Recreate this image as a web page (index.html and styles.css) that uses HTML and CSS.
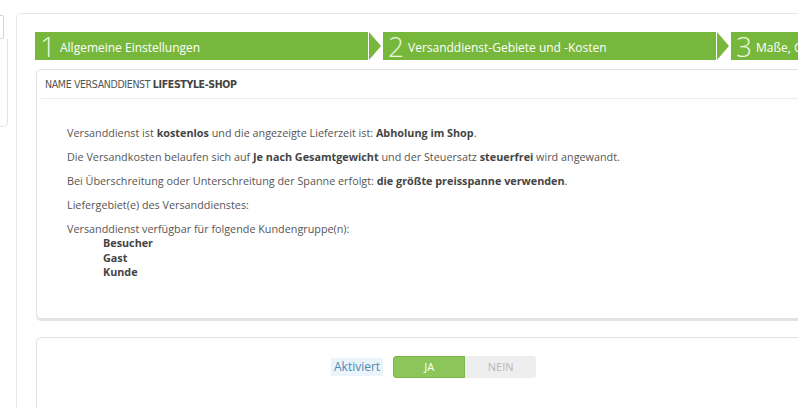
FILE: index.html
```html
<!DOCTYPE html>
<html lang="de">
<head>
<meta charset="utf-8">
<title>Versanddienst</title>
<link rel="stylesheet" href="styles.css">
</head>
<body>
<div class="page">
  <aside class="side">
    <div class="side-input"></div>
    <div class="side-box"></div>
  </aside>
  <main class="panel">
    <nav class="steps">
      <div class="step">
        <div class="step-body"><span class="step-num">1</span><span class="step-label">Allgemeine Einstellungen</span></div>
        <svg class="step-arrow" width="14" height="28" viewBox="0 0 14 28"><polygon points="1,0 13,14 1,28" fill="#77b83c"/></svg>
      </div>
      <div class="step">
        <div class="step-body"><span class="step-num">2</span><span class="step-label">Versanddienst-Gebiete und -Kosten</span></div>
        <svg class="step-arrow" width="14" height="28" viewBox="0 0 14 28"><polygon points="1,0 13,14 1,28" fill="#77b83c"/></svg>
      </div>
      <div class="step">
        <div class="step-body"><span class="step-num">3</span><span class="step-label">Maße, Gewicht</span></div>
      </div>
    </nav>

    <section class="card">
      <header class="card-head">Name Versanddienst <b>Lifestyle-Shop</b></header>
      <div class="card-body">
        <p>Versanddienst ist <b>kostenlos</b> und die angezeigte Lieferzeit ist: <b>Abholung im Shop</b>.</p>
        <p>Die Versandkosten belaufen sich auf <b>Je nach Gesamtgewicht</b> und der Steuersatz <b>steuerfrei</b> wird angewandt.</p>
        <p>Bei Überschreitung oder Unterschreitung der Spanne erfolgt: <b>die größte preisspanne verwenden</b>.</p>
        <p>Liefergebiet(e) des Versanddienstes:</p>
        <p class="last">Versanddienst verfügbar für folgende Kundengruppe(n):</p>
        <ul class="groups">
          <li>Besucher</li>
          <li>Gast</li>
          <li>Kunde</li>
        </ul>
      </div>
    </section>

    <section class="card card-form">
      <div class="form-row">
        <span class="form-label">Aktiviert</span>
        <div class="toggle">
          <span class="toggle-on">JA</span>
          <span class="toggle-off">NEIN</span>
        </div>
      </div>
    </section>
  </main>
</div>
</body>
</html>
```

FILE: styles.css
```css
html, body {
  margin: 0;
  padding: 0;
  background: #fff;
}

body {
  width: 798px;
  height: 408px;
  overflow: hidden;
  font-family: "Open Sans", "Noto Sans", sans-serif;
  color: #555;
}

.page {
  display: flex;
  align-items: flex-start;
  padding-top: 13px;
  width: 1400px;
}

/* left sidebar remnant */
.side {
  width: 8px;
  margin-right: 8px;
  display: flex;
  flex-direction: column;
  padding-top: 2px;
}

.side-input {
  width: 3px;
  height: 22px;
  border: 1px solid #d6d6d6;
  border-left: none;
  border-radius: 0 2px 2px 0;
}

.side-box {
  width: 7px;
  height: 87px;
  border-right: 1px solid #e3e3e3;
  border-bottom: 1px solid #e3e3e3;
  border-radius: 0 0 5px 0;
}

/* main panel */
.panel {
  width: 1100px;
  height: 420px;
  border: 1px solid #e6e6e6;
  border-radius: 5px;
  padding: 18px 18px 0 18px;
  box-sizing: border-box;
}

/* wizard steps */
.steps {
  display: flex;
  height: 28px;
}

.step {
  display: flex;
  margin-right: 1px;
}

.step-body {
  width: 333px;
  height: 28px;
  background: #77b83c;
  display: flex;
  align-items: center;
  padding-left: 5px;
  box-sizing: border-box;
  color: #fff;
  white-space: nowrap;
}

.step-num {
  font-family: "Open Sans", sans-serif;
  font-weight: 300;
  font-size: 28px;
  line-height: 24px;
  color: #eaf6df;
  margin-right: 4px;
}

.step-label {
  font-size: 12px;
  line-height: 16px;
  padding-top: 4px;
}

.step-arrow {
  display: block;
}

/* cards */
.card {
  margin-top: 9px;
  margin-left: 1px;
  border: 1px solid #e2e2e2;
  border-radius: 5px;
  box-shadow: 0 2px 0 #e2e2e2;
}

.card-head {
  margin: 0 4px;
  padding: 0 4px;
  height: 28px;
  line-height: 29px;
  border-bottom: 1px solid #ececec;
  font-family: "Liberation Sans Narrow", "DejaVu Sans Condensed", sans-serif;
  font-stretch: condensed;
  font-size: 10.5px;
  letter-spacing: -0.35px;
  text-transform: uppercase;
  color: #555;
}

.card-head b {
  color: #444;
}

.card-body {
  padding: 27px 0 38px 30px;
  font-size: 10.8px;
  line-height: 14px;
}

.card-body p {
  margin: 0 0 10px 0;
}

.card-body p.last {
  margin-bottom: 0;
}

.card-body b {
  color: #444;
}

.groups {
  list-style: none;
  margin: 0;
  padding: 0 0 0 36px;
  font-weight: bold;
  color: #444;
}

.groups li {
  line-height: 14.5px;
}

.card-form {
  margin-top: 18px;
  height: 120px;
  box-shadow: none;
}

.form-row {
  display: flex;
  align-items: center;
  padding: 18px 0 0 294px;
}

.form-label {
  background: #eaf4fa;
  color: #4f88b3;
  font-size: 12px;
  line-height: 18px;
  padding: 0 3px;
  margin-right: 10px;
}

.toggle {
  display: flex;
  height: 22px;
  font-size: 11px;
}

.toggle-on,
.toggle-off {
  width: 72px;
  display: flex;
  align-items: center;
  justify-content: center;
  box-sizing: border-box;
}

.toggle-on {
  background: #8cc65a;
  border: 1px solid #7ab648;
  border-radius: 3px 0 0 3px;
  color: #fff;
}

.toggle-off {
  width: 71px;
  background: #eeeeee;
  border-radius: 0 3px 3px 0;
  color: #b8b8b8;
}
```
